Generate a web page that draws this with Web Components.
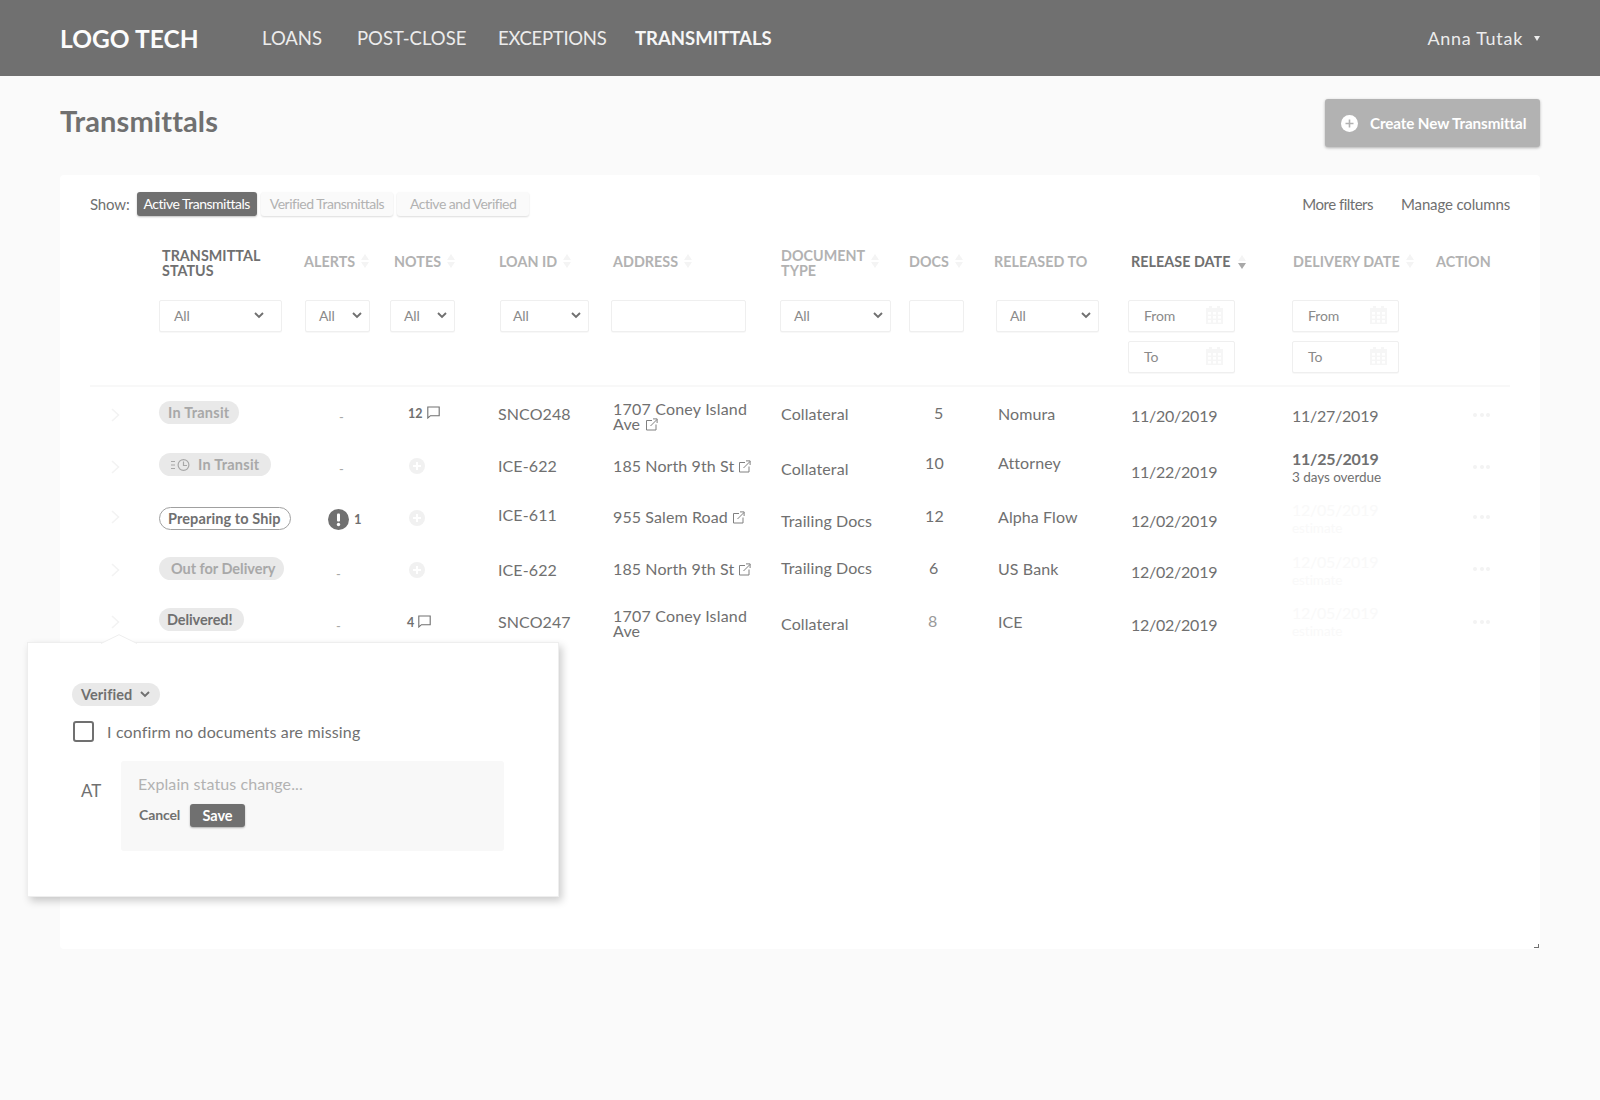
<!DOCTYPE html>
<html lang="en"><head><meta charset="utf-8"><title>Transmittals</title>
<style>
html,body{margin:0;padding:0;background:#fafafa;min-height:1100px}
body{font-family:Lato,"Open Sans",sans-serif;color:#707070;--cols:69px 141px 90px 108px 115px 168px 128px 88px 131px 164px 144px 74px}
</style></head><body>
<app-shell>
  <app-header slot="header">
    <nav-link w="95">LOANS</nav-link>
    <nav-link w="141">POST-CLOSE</nav-link>
    <nav-link w="137" style="letter-spacing:-.3px">EXCEPTIONS</nav-link>
    <nav-link active>TRANSMITTALS</nav-link>
  </app-header>
  <page-head>Transmittals</page-head>
  <tx-card>
    <show-bar>
      <seg-btn active pad="7">Active Transmittals</seg-btn>
      <seg-btn pad="9">Verified Transmittals</seg-btn>
      <seg-btn pad="13">Active and Verified</seg-btn>
    </show-bar>
    <grid-row h="30" mt="30" mb="24">
      <span></span>
      <col-head x="3" strong two>TRANSMITTAL<br>STATUS</col-head>
      <col-head x="4" sort>ALERTS</col-head>
      <col-head x="4" sort>NOTES</col-head>
      <col-head x="1" sort>LOAN ID</col-head>
      <col-head sort>ADDRESS</col-head>
      <col-head sort two>DOCUMENT<br>TYPE</col-head>
      <col-head sort>DOCS</col-head>
      <col-head x="-3">RELEASED TO</col-head>
      <col-head x="3" sort="down" strong>RELEASE DATE</col-head>
      <col-head x="1" sort>DELIVERY DATE</col-head>
      <col-head>ACTION</col-head>
    </grid-row>
    <grid-row h="87" divider>
      <span></span>
      <filter-box w="123" pl="14" pr="17">All</filter-box>
      <filter-box w="65" x="5">All</filter-box>
      <filter-box w="65">All</filter-box>
      <filter-box w="89" x="2" pl="12">All</filter-box>
      <filter-box w="135" x="-2" plain></filter-box>
      <filter-box w="111" x="-1">All</filter-box>
      <filter-box w="55" plain></filter-box>
      <filter-box w="103" x="-1">All</filter-box>
      <date-range></date-range>
      <date-range></date-range>
      <span></span>
    </grid-row>

    <grid-row h="52">
      <tx-cell t="18"><row-chevron></row-chevron></tx-cell>
      <tx-cell t="14"><status-pill kind="muted" style="letter-spacing:.25px">In Transit</status-pill></tx-cell>
      <tx-cell t="19" x="39"><span class="dash">-</span></tx-cell>
      <tx-cell t="15" x="18"><note-count>12</note-count></tx-cell>
      <tx-cell t="17">SNCO248</tx-cell>
      <tx-cell t="13.5" lh="15" ls=".2">1707 Coney Island<br>Ave <ext-icon></ext-icon></tx-cell>
      <tx-cell t="17">Collateral</tx-cell>
      <tx-cell t="16" x="25">5</tx-cell>
      <tx-cell t="17" x="1">Nomura</tx-cell>
      <tx-cell t="19" x="3" ls="-.25">11/20/2019</tx-cell>
      <tx-cell t="19" ls="-.25">11/27/2019</tx-cell>
      <tx-cell t="18" x="37"><row-dots></row-dots></tx-cell>
    </grid-row>
    <grid-row h="52">
      <tx-cell t="18"><row-chevron></row-chevron></tx-cell>
      <tx-cell t="14"><status-pill kind="muted" icon pad="11" style="letter-spacing:.25px">In Transit</status-pill></tx-cell>
      <tx-cell t="19" x="39"><span class="dash">-</span></tx-cell>
      <tx-cell t="17" x="19"><add-note></add-note></tx-cell>
      <tx-cell t="17">ICE-622</tx-cell>
      <tx-cell t="17">185 North 9th St <ext-icon></ext-icon></tx-cell>
      <tx-cell t="20">Collateral</tx-cell>
      <tx-cell t="14" x="16">10</tx-cell>
      <tx-cell t="14" x="1">Attorney</tx-cell>
      <tx-cell t="23" x="3" ls="-.25">11/22/2019</tx-cell>
      <tx-cell t="10"><date-stack sub="3 days overdue" bold>11/25/2019</date-stack></tx-cell>
      <tx-cell t="18" x="37"><row-dots></row-dots></tx-cell>
    </grid-row>
    <grid-row h="52">
      <tx-cell t="16"><row-chevron></row-chevron></tx-cell>
      <tx-cell t="16"><status-pill kind="outline">Preparing to Ship</status-pill></tx-cell>
      <tx-cell t="18" x="28"><alert-count>1</alert-count></tx-cell>
      <tx-cell t="17" x="19"><add-note></add-note></tx-cell>
      <tx-cell t="14">ICE-611</tx-cell>
      <tx-cell t="16">955 Salem Road <ext-icon></ext-icon></tx-cell>
      <tx-cell t="20">Trailing Docs</tx-cell>
      <tx-cell t="15" x="16">12</tx-cell>
      <tx-cell t="16" x="1">Alpha Flow</tx-cell>
      <tx-cell t="20" x="3" ls="-.25">12/02/2019</tx-cell>
      <tx-cell t="9"><date-stack sub="estimate" faint>12/05/2019</date-stack></tx-cell>
      <tx-cell t="16" x="37"><row-dots></row-dots></tx-cell>
    </grid-row>
    <grid-row h="52">
      <tx-cell t="17"><row-chevron></row-chevron></tx-cell>
      <tx-cell t="14"><status-pill kind="muted" style="padding:0 9px 0 12px;letter-spacing:-.03px">Out for Delivery</status-pill></tx-cell>
      <tx-cell t="20" x="36"><span class="dash">-</span></tx-cell>
      <tx-cell t="17" x="19"><add-note></add-note></tx-cell>
      <tx-cell t="17">ICE-622</tx-cell>
      <tx-cell t="16">185 North 9th St <ext-icon></ext-icon></tx-cell>
      <tx-cell t="15">Trailing Docs</tx-cell>
      <tx-cell t="15" x="20">6</tx-cell>
      <tx-cell t="16" x="1">US Bank</tx-cell>
      <tx-cell t="19" x="3" ls="-.25">12/02/2019</tx-cell>
      <tx-cell t="9"><date-stack sub="estimate" faint>12/05/2019</date-stack></tx-cell>
      <tx-cell t="16" x="37"><row-dots></row-dots></tx-cell>
    </grid-row>
    <grid-row h="52">
      <tx-cell t="17"><row-chevron></row-chevron></tx-cell>
      <tx-cell t="13"><status-pill kind="done">Delivered!</status-pill></tx-cell>
      <tx-cell t="20" x="36"><span class="dash">-</span></tx-cell>
      <tx-cell t="16" x="17"><note-count>4</note-count></tx-cell>
      <tx-cell t="17">SNCO247</tx-cell>
      <tx-cell t="13" lh="15" ls=".2">1707 Coney Island<br>Ave</tx-cell>
      <tx-cell t="19">Collateral</tx-cell>
      <tx-cell t="16" x="19"><span style="color:#999">8</span></tx-cell>
      <tx-cell t="17" x="1">ICE</tx-cell>
      <tx-cell t="20" x="3" ls="-.25">12/02/2019</tx-cell>
      <tx-cell t="8"><date-stack sub="estimate" faint>12/05/2019</date-stack></tx-cell>
      <tx-cell t="17" x="37"><row-dots></row-dots></tx-cell>
    </grid-row>

    <verify-popover slot="overlay"></verify-popover>
  </tx-card>
</app-shell>

<script>
const def=(name,html,init)=>customElements.define(name,class extends HTMLElement{
  constructor(){super();this.attachShadow({mode:'open'}).innerHTML=html;}
  connectedCallback(){init&&init.call(this,this)}
});
const px=(el,attr,prop)=>{if(el.hasAttribute(attr))el.style.setProperty(prop,el.getAttribute(attr)+'px')};

const chevDown=(c='#707070')=>`<svg width="10" height="7" viewBox="0 0 10 7" fill="none" stroke="${c}" stroke-width="1.9"><path d="M1 1l4 4 4-4"/></svg>`;

def('app-shell',`<style>:host{display:block}main{padding:0 60px}</style>
<slot name="header"></slot><main><slot></slot></main>`);

def('app-header',`<style>
:host{display:flex;align-items:center;height:76px;background:#707070;color:#fff;padding:0 60px 0 60px}
.logo{flex:0 0 202px;font-size:24.5px;font-weight:700;letter-spacing:.05px;padding-top:1px;color:#fcfcfc}
nav{display:flex;flex:1;align-items:center}
.user{display:flex;align-items:center;font-size:18px;color:#ececec;letter-spacing:.7px}
.user i{display:block;margin-left:11px;width:0;height:0;border:3.5px solid transparent;border-top:5px solid #ececec;border-bottom:0}
</style><div class="logo">LOGO TECH</div><nav><slot></slot></nav><div class="user">Anna Tutak<i></i></div>`);

def('nav-link',`<style>:host{display:block;font-size:18.5px;color:#ececec;font-weight:400;white-space:nowrap}
:host([active]){font-weight:700;color:#f6f6f6}</style><slot></slot>`,el=>{
  if(el.hasAttribute('w'))el.style.flex=`0 0 ${el.getAttribute('w')}px`;
});

def('page-head',`<style>
:host{display:flex;justify-content:space-between;align-items:flex-start;padding-top:23px;height:76px}
h1{margin:0;font-size:29px;line-height:44px;font-weight:700;letter-spacing:.1px;color:#707070}
button{display:flex;align-items:center;height:48px;width:215px;border:0;border-radius:3px;background:#b2b2b2;color:#fff;font:700 15.2px Lato,sans-serif;letter-spacing:-.1px;padding:0 0 0 16px;box-shadow:0 1px 3px rgba(0,0,0,.3)}
svg{margin-right:12px;flex:none}
</style><h1><slot></slot></h1><button><svg width="17" height="17" viewBox="0 0 17 17"><circle cx="8.5" cy="8.5" r="8.5" fill="#fff"/><path d="M8.5 4.500v8M4.500 8.500h8" stroke="#b2b2b2" stroke-width="1.6"/></svg>Create New Transmittal</button>`);

def('tx-card',`<style>
:host{display:block;position:relative;box-sizing:border-box;height:774px;background:#fff;border-radius:4px;padding:17px 30px 0}
.grip{position:absolute;right:1px;bottom:1px;width:4px;height:3px;border-right:1.5px solid #707070;border-bottom:1.5px solid #707070}
</style><slot></slot><slot name="overlay"></slot><div class="grip"></div>`);

def('show-bar',`<style>
:host{display:flex;align-items:center;height:24px;font-size:15px;letter-spacing:-.15px}
.l{margin-right:7px}
.r{margin-left:auto;display:flex;gap:28px;color:#707070}
.m{letter-spacing:-.5px}
.b{display:flex;gap:4px}
</style><span class="l">Show:</span><div class="b"><slot></slot></div><div class="r"><span class="m">More filters</span><span>Manage columns</span></div>`);

def('seg-btn',`<style>
:host{display:block;height:24px;line-height:24px;padding:0 var(--p,6px);border-radius:3px;font-size:14px;letter-spacing:-.5px;color:#b2b2b2;background:#fafafa;box-shadow:0 1px 2px rgba(0,0,0,.14);white-space:nowrap}
:host([active]){background:#707070;color:#fff;box-shadow:0 1px 2px rgba(0,0,0,.25)}
</style><slot></slot>`,el=>px(el,'pad','--p'));

def('grid-row',`<style>
:host{display:grid;grid-template-columns:var(--cols);align-items:start;box-sizing:border-box;font-size:16px;letter-spacing:.1px;color:#707070;white-space:nowrap}
:host([divider]){border-bottom:2px solid #f8f8f8}
</style><slot></slot>`,el=>{
  const a=n=>el.getAttribute(n);
  if(a('h'))el.style.height=a('h')+'px';
  if(a('mt'))el.style.marginTop=a('mt')+'px';
  if(a('mb'))el.style.marginBottom=a('mb')+'px';
});

def('col-head',`<style>
:host{display:flex;align-items:center;box-sizing:border-box;height:30px;margin-left:var(--x,0px);font-size:14.3px;line-height:15px;letter-spacing:.05px;color:#b2b2b2;font-weight:700;white-space:nowrap}
:host([strong]){color:#707070}
:host([two]) span{margin-top:4px}
.s{display:none;margin-left:6px;flex-direction:column;gap:2px}
:host([sort]) .s{display:flex}
i{display:block;width:0;height:0;border:4px solid transparent}
.u{border-bottom:6px solid #f4f4f4;border-top:0}
.d{border-top:6px solid #f4f4f4;border-bottom:0}
:host([sort=down]) .s{margin-left:8px;margin-top:2px}
:host([sort=down]) .d{border-top-color:#a8a8a8}
</style><span><slot></slot></span><div class="s"><i class="u"></i><i class="d"></i></div>`,el=>px(el,'x','--x'));

def('filter-box',`<style>
:host{display:flex;align-items:center;justify-content:space-between;box-sizing:border-box;height:32px;width:var(--w);margin-left:var(--x,0px);padding:0 var(--pr,7px) 1px var(--pl,13px);background:#fff;border:1px solid #efefef;border-radius:2px;box-shadow:0 1px 1px rgba(0,0,0,.03);font-size:14px;letter-spacing:-.1px;color:#8a8a8a}
svg{flex:none}
:host([plain]) svg{display:none}
</style><slot></slot><svg width="10" height="7" viewBox="0 0 10 7" fill="none" stroke="#707070" stroke-width="1.9"><path d="M1 1l4 4 4-4"/></svg>`,el=>{px(el,'w','--w');px(el,'x','--x');px(el,'pl','--pl');px(el,'pr','--pr')});

def('date-field',`<style>
:host{display:flex;align-items:center;justify-content:space-between;box-sizing:border-box;height:32px;width:107px;padding:0 11px 2px 15px;background:#fff;border:1px solid #efefef;border-radius:2px;box-shadow:0 1px 1px rgba(0,0,0,.03);font-size:14px;letter-spacing:-.1px;color:#8a8a8a}
</style><slot></slot><svg width="17" height="18" viewBox="0 0 17 18" fill="#f6f6f6"><path d="M3 0h3v2h5V0h3v2h3v16H0V2h3z"/><g fill="#fff"><rect x="2" y="6" width="3" height="2.500"/><rect x="7" y="6" width="3" height="2.500"/><rect x="12" y="6" width="3" height="2.500"/><rect x="2" y="10" width="3" height="2.500"/><rect x="7" y="10" width="3" height="2.500"/><rect x="12" y="10" width="3" height="2.500"/><rect x="2" y="14" width="3" height="2.500"/><rect x="7" y="14" width="3" height="2.500"/><rect x="12" y="14" width="3" height="2.500"/></g></svg>`);

def('date-range',`<style>:host{display:flex;flex-direction:column;gap:9px}</style><date-field>From</date-field><date-field>To</date-field>`);

def('tx-cell',`<style>
:host{display:block;margin-top:var(--t,0px);margin-left:var(--x,0px);line-height:var(--lh,20px);min-height:var(--lh,20px);white-space:nowrap}
</style><slot></slot>`,el=>{px(el,'t','--t');px(el,'x','--x');px(el,'lh','--lh');
  if(el.hasAttribute('ls'))el.style.letterSpacing=el.getAttribute('ls')+'px';
  el.querySelectorAll('.dash').forEach(d=>{d.style.cssText='font-size:13px;color:#a8a8a8'});
});

def('row-chevron',`<style>:host{display:block;margin-left:21px;height:20px}svg{display:block;margin-top:3px}</style>
<svg width="9" height="14" viewBox="0 0 9 14" fill="none" stroke="#f3f3f3" stroke-width="1.6"><path d="M1 1l6.500 6L1 13"/></svg>`);

def('status-pill',`<style>
:host{display:inline-flex;align-items:center;box-sizing:border-box;height:23px;padding:0 var(--p,9px);border-radius:12px;background:#e9e9e9;color:#a8a8a8;font-size:14.5px;font-weight:700;letter-spacing:.05px;line-height:23px;white-space:nowrap}
:host([kind=outline]){background:#fff;border:1px solid #a0a0a0;color:#707070;padding:0 9px 0 8px;letter-spacing:.1px}
:host([kind=done]){color:#707070;padding:0 12px 0 8px;letter-spacing:-.1px}
svg{display:none;margin-right:7px}
:host([icon]) svg{display:block}
</style><svg width="21" height="14" viewBox="0 0 21 14" fill="none" stroke="#a8a8a8" stroke-width="1.2"><path d="M1 3.500h4M1 7h4M1 10.500h4"/><circle cx="13.500" cy="7" r="5.400"/><path d="M13.500 3.500V7.500H17"/></svg><slot></slot>`,el=>px(el,'pad','--p'));

def('note-count',`<style>
:host{display:inline-flex;align-items:center;gap:4px;font-size:12.5px;font-weight:700;letter-spacing:.1px;color:#707070;line-height:20px}
svg{display:block;margin-top:-3px}
</style><slot></slot><svg width="13" height="13" viewBox="0 0 13 13" fill="none" stroke="#707070" stroke-width="1.100"><path d="M.8 1h11.400v8.700H3.500L.8 12z"/></svg>`);

def('add-note',`<style>:host{display:block;height:20px}svg{display:block;margin:2px 0 0 0}</style>
<svg width="16" height="16" viewBox="0 0 16 16"><circle cx="8" cy="8" r="8" fill="#f1f1f1"/><path d="M8 4v8M4 8h8" stroke="#fff" stroke-width="2"/></svg>`);

def('alert-count',`<style>
:host{display:inline-flex;align-items:center;gap:5px;font-size:13px;font-weight:700;color:#707070;line-height:21px;height:21px}
svg{display:block}
</style><svg width="21" height="21" viewBox="0 0 21 21"><circle cx="10.500" cy="10.500" r="10.500" fill="#707070"/><rect x="9" y="4.500" width="3" height="8" rx="1" fill="#fff"/><circle cx="10.500" cy="15.500" r="1.700" fill="#fff"/></svg><slot></slot>`);

def('ext-icon',`<style>:host{display:inline-block;vertical-align:-1px;margin-left:0}svg{display:block}</style>
<svg width="13" height="13" viewBox="0 0 13 13" fill="none" stroke="#808080" stroke-width="1"><path d="M7 2.500H1.500v9.500h9.500V6.500"/><path d="M5.500 8L12 1.500M8 .9h4.100V5"/></svg>`);

def('row-dots',`<style>:host{display:flex;gap:2.500px;height:20px;align-items:center}i{display:block;width:4px;height:4px;border-radius:50%;background:#f3f3f3}</style><i></i><i></i><i></i>`);

def('date-stack',`<style>
:host{display:block;color:#707070}
div{font-size:13.5px;line-height:16px;letter-spacing:-.05px}
span{display:block;line-height:20px;letter-spacing:-.25px}
:host([bold]) span{font-weight:700}
:host([faint]) span,:host([faint]) div{color:#f9f9f9}
</style><span><slot></slot></span><div></div>`,el=>{el.shadowRoot.querySelector('div').textContent=el.getAttribute('sub')});

def('verify-popover',`<style>
:host{display:block;position:absolute;left:-33px;top:467px;box-sizing:border-box;width:532px;height:255px;padding:40px 54px 0 44px;background:#fff;border:1px solid #eee;box-shadow:3px 4px 8px rgba(0,0,0,.2);z-index:5;color:#707070}
.tip{position:absolute;left:72px;top:-9px;display:block}
.pill{display:inline-flex;align-items:center;gap:8px;height:23px;box-sizing:border-box;padding:0 10px 0 9px;border-radius:12px;background:#e9e9e9;font-size:14.5px;font-weight:700;letter-spacing:.1px}
.chk{display:flex;align-items:center;margin-top:15px;margin-left:1px;font-size:16px;letter-spacing:.15px}
.box{width:21px;height:21px;box-sizing:border-box;border:2px solid #707070;border-radius:3px;margin-right:13px;flex:none}
.cmt{display:flex;margin-top:19px}
.at{flex:0 0 49px;padding:20px 0 0 9px;box-sizing:border-box;font-size:17px;line-height:20px}
.area{flex:1;height:90px;box-sizing:border-box;padding:13px 17px 0;background:#f8f8f8;border-radius:3px}
.ph{font-size:16px;letter-spacing:.1px;color:#b2b2b2;line-height:20px}
.acts{display:flex;align-items:center;margin-top:10px;padding-left:1px}
.cancel{font-size:14px;font-weight:700;letter-spacing:-.1px;width:51px;margin-top:-3px}
.save{width:55px;height:23px;line-height:23px;text-align:center;background:#707070;color:#fff;border-radius:3px;font-size:14.5px;font-weight:700;box-shadow:0 1px 2px rgba(0,0,0,.3)}
</style>
<svg class="tip" width="38" height="10" viewBox="0 0 38 10"><path d="M1 9.500L19 .7 37 9.500" fill="#fff" stroke="#eee"/></svg>
<div class="pill">Verified ${chevDown()}</div>
<div class="chk"><div class="box"></div><span>I confirm no documents are missing</span></div>
<div class="cmt"><div class="at">AT</div><div class="area"><div class="ph">Explain status change...</div><div class="acts"><span class="cancel">Cancel</span><span class="save">Save</span></div></div></div>`);
</script>
</body></html>
